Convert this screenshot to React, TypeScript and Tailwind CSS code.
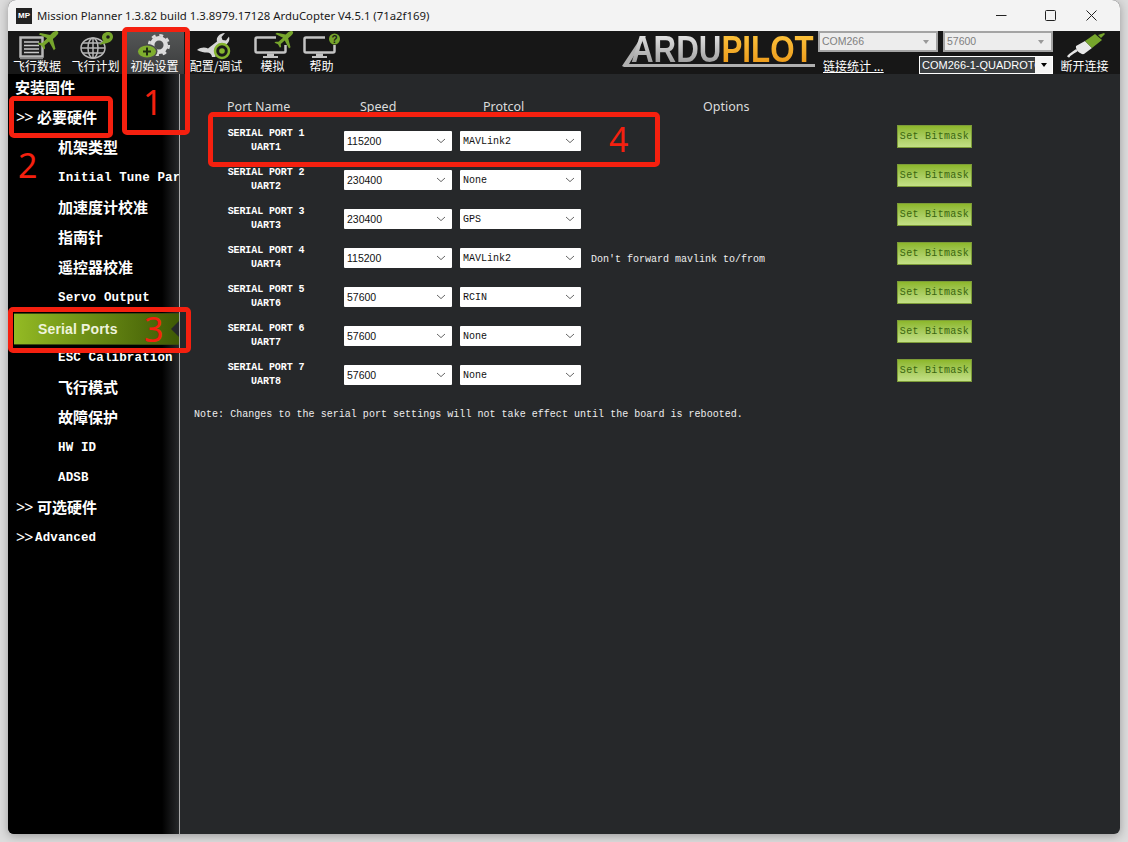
import type { ReactNode } from "react"

const PLANE =
  "M20 0c1.400-.3 2.600.9 2.200 2.200-.3 1-1.200 2-2.400 3L17 7.600 19.500 17l-1.600 1.400L13.400 10 9.200 13.600l.4 3-1.200 1L6.300 14 2.600 12.300l1.200-1.100 3 .2L11.600 7 3.600 3.200 5.100 1.800l9.300 2L17 1.300C18 .6 19 .2 20 0z"

function Plane({ x, y, s = 1 }: { x: number; y: number; s?: number }) {
  return <path d={PLANE} transform={`translate(${x} ${y}) scale(${s})`} fill="#76a52c" />
}

function DataIcon() {
  return (
    <svg width="46" height="30" viewBox="0 0 46 30">
      <rect x="6.500" y="6.500" width="22" height="19" fill="#222" stroke="#b8b8b8" strokeWidth="2.500" />
      <path d="M10 11h15M10 14.500h15M10 18h15M10 21.500h15" stroke="#c8c8c8" strokeWidth="1.300" />
      <path d="M6 27.500h23" stroke="#888" strokeWidth="1.500" />
      <Plane x={21} y={0} s={1.050} />
    </svg>
  )
}

function GlobeIcon() {
  return (
    <svg width="46" height="30" viewBox="0 0 46 30">
      <g fill="none" stroke="#b5b5b5" strokeWidth="1.500">
        <ellipse cx="20" cy="17" rx="12" ry="10" />
        <ellipse cx="20" cy="17" rx="5" ry="10" />
        <path d="M8 17h24M10 12h20M10 22h20M20 7v20" />
      </g>
      <path d="M35 1c-3.500 0-6 2.300-6 5.200 0 1.600.6 2.700 1.400 3.600L26 14l7.300-1.800c3-.5 6.700-2.700 6.700-6.400C40 3 37.800 1 35 1z" fill="#76a52c" />
      <circle cx="35" cy="6" r="1.800" fill="#1a1a1a" />
    </svg>
  )
}

function SetupIcon() {
  return (
    <svg width="46" height="30" viewBox="0 0 46 30">
      <g transform="translate(27 14)">
        <circle r="6.800" fill="none" stroke="#dcdcdc" strokeWidth="4.500" />
        <circle r="9.800" fill="none" stroke="#dcdcdc" strokeWidth="2.600" strokeDasharray="3.900 3.800" />
      </g>
      <ellipse cx="15" cy="20.500" rx="10.500" ry="7.500" fill="#4a4b4b" />
      <ellipse cx="15" cy="20.500" rx="9" ry="6" fill="#7fae2e" />
      <path d="M15 16.500v8M11 20.500h8" stroke="#1f2a10" strokeWidth="2" />
    </svg>
  )
}

function ConfigIcon() {
  return (
    <svg width="46" height="30" viewBox="0 0 46 30">
      <path
        d="M4 19c4-3 8-3 11-1.500l9-7c-1-4 2-8 8-8.500l-3.500 4 1 3 3.500.5 3-4c1.500 5-2 9.500-8 9l-5.500 4.500v7h-3.500c-.5-3-2-4.500-5-4.500-3 0-6-.5-10-2.500z"
        fill="#d6d6d6"
      />
      <circle cx="29" cy="20" r="7" fill="#1a1a1a" stroke="#86b52f" strokeWidth="2.500" />
      <circle cx="29" cy="20" r="2.800" fill="#86b52f" />
    </svg>
  )
}

function Monitor({ children }: { children: ReactNode }) {
  return (
    <svg width="46" height="30" viewBox="0 0 46 30">
      <path d="M26 6.500H7a1.500 1.500 0 0 0-1.500 1.500v12a1.500 1.500 0 0 0 1.500 1.500h27a1.500 1.500 0 0 0 1.500-1.500V14" fill="none" stroke="#c4c4c4" strokeWidth="2.500" />
      <path d="M17 22.500h7v2.500h-7zM13 25h15v2H13z" fill="#c4c4c4" />
      {children}
    </svg>
  )
}

function ToolItem({ label, width, active, children }: { label: string; width: string; active?: boolean; children: ReactNode }) {
  return (
    <div
      className={`flex flex-col items-center h-full ${width} ${
        active ? "bg-gradient-to-b from-[#555757] to-[#3a3b3c]" : ""
      }`}
    >
      <div className="h-[28px]">{children}</div>
      <span className="text-[12px] leading-[13px] text-white whitespace-nowrap font-['Noto_Sans_CJK_SC',sans-serif]">
        {label}
      </span>
    </div>
  )
}

function Arrow({ className }: { className: string }) {
  return <span className={`w-0 h-0 border-x-[3px] border-x-transparent border-t-[4px] ${className}`} />
}

function TopCombo({ value, width }: { value: string; width: string }) {
  return (
    <div className={`${width} h-[21px] bg-[#ededed] border-2 border-[#a4a4a4] flex items-center justify-between pl-[2px] pr-[7px]`}>
      <span className="text-[10.500px] text-[#7f7f7f] font-['Liberation_Sans',sans-serif]">{value}</span>
      <Arrow className="border-t-[#999]" />
    </div>
  )
}

const cjk = "font-['Noto_Sans_CJK_SC',sans-serif]"
const mono = "font-['Liberation_Mono',monospace]"

function SideItem({ label, indent, latin }: { label: string; indent?: boolean; latin?: boolean }) {
  return (
    <div
      className={`h-[30px] flex items-center text-white font-bold whitespace-nowrap overflow-hidden ${indent ? "pl-[50px]" : "pl-[8px]"} ${
        latin ? `${mono} text-[12.500px] tracking-[0.150px] pt-[3px]` : `${cjk} text-[15px]`
      }`}
    >
      {label}
    </div>
  )
}

function GroupItem({ label, latin }: { label: string; latin?: boolean }) {
  return (
    <div className="h-[30px] flex items-center text-white pl-[8px] whitespace-nowrap">
      <span className={`font-['Noto_Sans',sans-serif] text-[16px] tracking-[-1px] ${latin ? "w-[19px]" : "w-[21px]"}`}>{">>"}</span>
      <span className={`font-bold ${latin ? `${mono} text-[12.500px] tracking-[0.150px] pt-[3px]` : `${cjk} text-[15px]`}`}>{label}</span>
    </div>
  )
}

function PortSelect({ value, width, sans }: { value: string; width: string; sans?: boolean }) {
  return (
    <div className={`${width} h-[20px] bg-white rounded-[1px] flex items-center justify-between pl-[3px] pr-[6px] text-[#111] whitespace-nowrap`}>
      <span className={`pt-[1px] ${sans ? "text-[10.500px] font-['Liberation_Sans',sans-serif]" : `${mono} text-[10px]`}`}>{value}</span>
      <svg width="10" height="6" viewBox="0 0 10 6">
        <path d="M1 1l4 3.600L9 1" fill="none" stroke="#666" strokeWidth="1" />
      </svg>
    </div>
  )
}

const ports = [
  { name: "SERIAL PORT 1", uart: "UART1", speed: "115200", protocol: "MAVLink2", note: "" },
  { name: "SERIAL PORT 2", uart: "UART2", speed: "230400", protocol: "None", note: "" },
  { name: "SERIAL PORT 3", uart: "UART3", speed: "230400", protocol: "GPS", note: "" },
  { name: "SERIAL PORT 4", uart: "UART4", speed: "115200", protocol: "MAVLink2", note: "Don't forward mavlink to/from" },
  { name: "SERIAL PORT 5", uart: "UART6", speed: "57600", protocol: "RCIN", note: "" },
  { name: "SERIAL PORT 6", uart: "UART7", speed: "57600", protocol: "None", note: "" },
  { name: "SERIAL PORT 7", uart: "UART8", speed: "57600", protocol: "None", note: "" },
]

function PortRow({ port }: { port: (typeof ports)[number] }) {
  return (
    <div className="h-[39px] flex items-start">
      <div className={`w-[150px] mt-[5px] text-center text-white font-bold text-[10px] leading-[14px] ${mono}`}>
        <div className="tracking-[-0.100px]">{port.name}</div>
        <div>{port.uart}</div>
      </div>
      <div className="mt-[9px] ml-[3px]">
        <PortSelect value={port.speed} width="w-[108px]" sans />
      </div>
      <div className="mt-[9px] ml-[8px]">
        <PortSelect value={port.protocol} width="w-[121px]" />
      </div>
      <div className={`w-[316px] mt-[10px] pl-[10px] h-[20px] flex items-center text-[10px] text-[#eee] whitespace-nowrap ${mono}`}>
        {port.note}
      </div>
      <div
        className={`w-[75px] h-[23px] mt-[3px] flex items-center justify-center text-[10px] tracking-[0.300px] text-[#3a6610] border border-[#7d9c38] bg-gradient-to-b from-[#8db72a] to-[#c3e085] ${mono}`}
      >
        Set Bitmask
      </div>
    </div>
  )
}

function RedBox({ className }: { className: string }) {
  return <div className={`absolute border-[5px] border-[#f5200f] rounded-[5px] ${className}`} />
}

function RedNumber({ n, className }: { n: string; className: string }) {
  return (
    <span className={`absolute text-[34px] leading-[34px] text-[#f5200f] font-['Noto_Sans',sans-serif] ${className}`}>{n}</span>
  )
}

export default function App() {
  return (
    <div className="relative w-[1128px] h-[842px] overflow-hidden bg-[#dcdcdc]">
      <div className="ml-[8px] w-[1112px] h-[834px] rounded-t-[8px] rounded-b-[6px] overflow-hidden flex flex-col shadow-[0_2px_10px_rgba(0,0,0,0.3)] bg-[#26282a]">
        {/* title bar */}
        <div className="h-[31px] shrink-0 bg-[#f3f3f3] flex items-center pl-[8px]">
          <div className="w-[16px] h-[16px] bg-[#222] text-white text-[8px] font-bold leading-[16px] text-center font-['Liberation_Sans',sans-serif]">
            MP
          </div>
          <span className="ml-[5px] text-[11.350px] text-[#1a1a1a] whitespace-nowrap font-['Noto_Sans',sans-serif]">
            Mission Planner 1.3.82 build 1.3.8979.17128 ArduCopter V4.5.1 (71a2f169)
          </span>
          <div className="ml-auto flex items-center pr-[23px]">
            <svg width="11" height="11" viewBox="0 0 11 11"><path d="M0 5.500h10.500" stroke="#222" strokeWidth="1" /></svg>
            <svg className="ml-[38px]" width="11" height="11" viewBox="0 0 11 11"><rect x=".5" y=".5" width="10" height="10" rx="1" fill="none" stroke="#222" strokeWidth="1" /></svg>
            <svg className="ml-[30px]" width="11" height="11" viewBox="0 0 11 11"><path d="M.5.500l10 10M10.500.500l-10 10" stroke="#222" strokeWidth="1" /></svg>
          </div>
        </div>

        {/* toolbar */}
        <div className="h-[43px] shrink-0 bg-[#171717] flex">
          <ToolItem label="飞行数据" width="w-[58px]"><DataIcon /></ToolItem>
          <ToolItem label="飞行计划" width="w-[59px]"><GlobeIcon /></ToolItem>
          <ToolItem label="初始设置" width="w-[59px]" active><SetupIcon /></ToolItem>
          <ToolItem label="配置/调试" width="w-[64px]"><ConfigIcon /></ToolItem>
          <ToolItem label="模拟" width="w-[49px]">
            <Monitor><Plane x={22} y={0} s={0.950} /></Monitor>
          </ToolItem>
          <ToolItem label="帮助" width="w-[49px]">
            <Monitor>
              <circle cx="35.500" cy="8" r="5.500" fill="#76a52c" />
              <text x="35.500" y="11.500" textAnchor="middle" fontSize="10" fontWeight="700" fill="#1a1a1a" fontFamily="Liberation Sans">?</text>
            </Monitor>
          </ToolItem>

          {/* logo */}
          <div className="relative ml-[276px] w-[194px] h-full">
            <svg className="absolute left-0 top-0" width="194" height="43" viewBox="0 0 194 43">
              <path d="M0 35L20 5h4L7 33h186v3H2z" fill="#b0b0b0" />
            </svg>
            <div className="absolute left-[9px] top-[-1px] origin-left scale-x-[.87] font-bold text-[36px] leading-[40px] whitespace-nowrap font-['Liberation_Sans',sans-serif]">
              <span className="bg-gradient-to-b from-[#f2f2f2] to-[#8f8f8f] bg-clip-text text-transparent">ARDU</span>
              <span className="bg-gradient-to-b from-[#ffc93f] to-[#e8920f] bg-clip-text text-transparent">PILOT</span>
            </div>
          </div>

          {/* connection controls */}
          <div className="flex flex-col w-[235px] ml-[2px]">
            <div className="flex gap-[5px]">
              <TopCombo value="COM266" width="w-[120px]" />
              <TopCombo value="57600" width="w-[110px]" />
            </div>
            <div className="flex mt-[4px] items-end">
              <span className={`ml-[5px] mb-[1px] w-[96px] text-[12px] leading-[14px] text-white underline whitespace-nowrap ${cjk}`}>链接统计 ...</span>
              <div className="w-[134px] h-[18px] border border-white bg-[#3c4042] flex items-stretch">
                <span className="flex-1 overflow-hidden whitespace-nowrap pl-[2px] text-[11px] leading-[16px] text-white font-['Liberation_Sans',sans-serif]">
                  COM266-1-QUADROTOR
                </span>
                <div className="w-[17px] shrink-0 bg-[#f4f4f4] flex items-center justify-center">
                  <Arrow className="border-t-black" />
                </div>
              </div>
            </div>
          </div>
          <div className="flex-1 flex flex-col items-center pr-[4px]">
            <svg width="46" height="28" viewBox="0 0 46 28">
              <path d="M6 26c2-3 5-4 9-7" stroke="#e4e4e4" strokeWidth="2.500" fill="none" />
              <path d="M14 15l9-5 7 7-8 6c-3 1-9-4-8-8z" fill="#e8e8e8" />
              <path d="M23 10l10-7 7 6-10 8z" fill="#76a52c" />
              <path d="M36 4l6-2 1 1-4 4z" fill="#76a52c" />
            </svg>
            <span className={`text-[12px] leading-[13px] text-white whitespace-nowrap ${cjk}`}>断开连接</span>
          </div>
        </div>

        {/* body */}
        <div className="flex-1 flex min-h-0">
          <div className="w-[172px] shrink-0 border-r border-[#a9a9a9] bg-[linear-gradient(to_right,#000_0,#000_154px,#26282a_171px)]">
            <div className={`h-[28px] pl-[7px] flex items-center pb-[2px] text-white font-bold text-[15px] ${cjk}`}>安装固件</div>
            <GroupItem label="必要硬件" />
            <SideItem label="机架类型" indent />
            <SideItem label="Initial Tune Params" indent latin />
            <SideItem label="加速度计校准" indent />
            <SideItem label="指南针" indent />
            <SideItem label="遥控器校准" indent />
            <SideItem label="Servo Output" indent latin />
            <div className="relative mt-[1px] mb-[-3px] h-[32px] ml-[6px] pl-[24px] flex items-center text-[14px] tracking-[0.150px] font-bold text-[#eef3dc] bg-gradient-to-r from-[#94bb24] to-[#3f5a05] border-y border-[#3b4a10] font-['Liberation_Sans',sans-serif]">
              Serial Ports
              <span className="absolute right-0 top-[7px] w-0 h-0 border-y-[8px] border-y-transparent border-r-[8px] border-r-[#26282a]" />
            </div>
            <SideItem label="ESC Calibration" indent latin />
            <SideItem label="飞行模式" indent />
            <SideItem label="故障保护" indent />
            <SideItem label="HW ID" indent latin />
            <SideItem label="ADSB" indent latin />
            <GroupItem label="可选硬件" />
            <GroupItem label="Advanced" latin />
          </div>

          <div className="flex-1 pl-[11px]">
            <div className="h-[18px] mt-[24px] mb-[6px] relative flex items-center text-[12.500px] text-[#dcdcdc] font-['Noto_Sans',sans-serif]">
              <span className="ml-[36px] w-[133px]">Port Name</span>
              <span className="w-[123px]">Speed</span>
              <span className="w-[220px]">Protcol</span>
              <span>Options</span>
            </div>
            {ports.map((p) => (
              <PortRow key={p.name} port={p} />
            ))}
            <div className={`mt-[14px] ml-[3px] text-[10px] tracking-[0.030px] leading-[12px] text-[#eee] whitespace-nowrap ${mono}`}>
              Note: Changes to the serial port settings will not take effect until the board is rebooted.
            </div>
          </div>
        </div>
      </div>

      {/* red annotations */}
      <RedBox className="left-[122px] top-[27px] w-[68px] h-[108px]" />
      <RedBox className="left-[9px] top-[96px] w-[104px] h-[42px]" />
      <RedBox className="left-[8px] top-[307px] w-[183px] h-[46px]" />
      <RedBox className="left-[208px] top-[112px] w-[452px] h-[55px]" />
      <RedNumber n="1" className="left-[143px] top-[85px]" />
      <RedNumber n="2" className="left-[18px] top-[148px]" />
      <RedNumber n="3" className="left-[144px] top-[312px]" />
      <RedNumber n="4" className="left-[609px] top-[122px]" />
    </div>
  )
}
